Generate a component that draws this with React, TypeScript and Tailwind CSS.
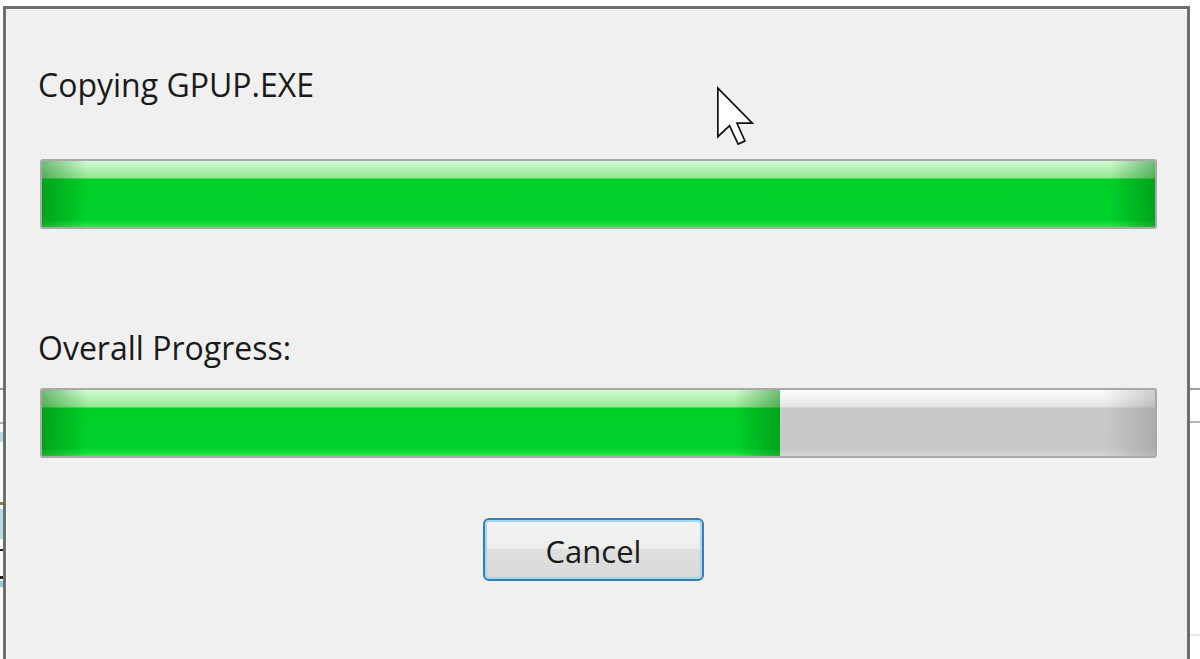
import React from "react";

function GreenFill({ width }: { width: string }) {
  return (
    <div
      className="h-full bg-[linear-gradient(to_right,rgba(0,110,10,0.45),rgba(0,110,10,0)_45px,rgba(0,110,10,0)_calc(100%-45px),rgba(0,110,10,0.45)),linear-gradient(to_bottom,#d2fad2_0%,#bff5bf_8%,#93e793_26%,#00cf27_27%,#00d12a_88%,#1ce23f_97%,#3fe35a_100%)]"
      style={{ width }}
    />
  );
}

function Bar({ percent }: { percent: number }) {
  return (
    <div className="flex h-[70px] w-[1117px] overflow-hidden rounded-[3px] border-2 border-[#a9a9a9] bg-[linear-gradient(to_right,rgba(120,120,120,0)_calc(100%-50px),rgba(120,120,120,0.35)),linear-gradient(to_bottom,#fafafa_0%,#f3f3f3_12%,#e2e2e2_26%,#c9c9c9_27%,#c8c8c8_88%,#d6d6d6_100%)]">
      <GreenFill width={`${percent}%`} />
    </div>
  );
}

export default function App() {
  return (
    <div className="relative flex h-[659px] w-[1200px] overflow-hidden bg-white font-['Open_Sans','Noto_Sans',sans-serif] text-[#1a1a1a]">
      {/* left background strip */}
      <div className="flex w-[3px] flex-col bg-white">
        <div className="mt-[388px] h-[2px] bg-[#9a9a9a]" />
        <div className="mt-[32px] h-[2px] bg-[#b0b0b0]" />
        <div className="mt-[8px] h-[10px] bg-[#b8dbe6]" />
        <div className="mt-[60px] h-[3px] bg-[#8a7a50]" />
        <div className="mt-[4px] h-[30px] bg-[#b8dbe6]" />
        <div className="mt-[10px] h-[2px] bg-[#222]" />
        <div className="mt-[25px] h-[3px] bg-[#222]" />
        <div className="mt-[2px] h-[6px] bg-[#9cc7db]" />
      </div>

      {/* dialog */}
      <div className="mt-[6px] flex h-[660px] w-[1187px] flex-col border-x-[3px] border-t-[3px] border-[#6e6e6e] bg-[#f0f0f0] shadow-[inset_1px_1px_0_#fbfbfb]">
        <div className="pl-[32px] pt-[56px] text-[32px] leading-[40px]">
          Copying GPUP.EXE
        </div>
        <div className="ml-[34px] mt-[54px]">
          <Bar percent={100} />
        </div>
        <div className="pl-[32px] pt-[99px] text-[32px] leading-[40px]">
          Overall Progress:
        </div>
        <div className="ml-[34px] mt-[20px]">
          <Bar percent={66.3} />
        </div>
        <div className="ml-[477px] mt-[60px]">
          <div className="flex h-[63px] w-[221px] items-center justify-center rounded-[6px] border-2 border-[#3b7db0] bg-[linear-gradient(to_bottom,#f4f4f4_0%,#eeeeee_48%,#e0e0e0_50%,#d9d9d9_100%)] pt-[2px] shadow-[inset_0_0_0_2px_#9fdaf5] text-[31px] leading-[40px]">
            Cancel
          </div>
        </div>
      </div>

      {/* right background strip */}
      <div className="flex flex-1 flex-col bg-white">
        <div className="mt-[388px] h-[2px] bg-[#a0a0a0]" />
        <div className="mt-[31px] h-[2px] bg-[#b5b5b5]" />
        <div className="mt-[211px] h-[2px] bg-[#e8e8e8]" />
      </div>

      {/* mouse cursor */}
      <svg
        className="absolute left-[716px] top-[86px]"
        width="40"
        height="62"
        viewBox="0 0 13 20"
      >
        <path
          d="M0.6 0.6 L0.6 16.4 L4.4 12.8 L7.2 18.8 L9.4 17.8 L6.8 12 L11.8 12 Z"
          fill="#ffffff"
          stroke="#111111"
          strokeWidth="0.55"
          strokeLinejoin="miter"
        />
      </svg>
    </div>
  );
}
